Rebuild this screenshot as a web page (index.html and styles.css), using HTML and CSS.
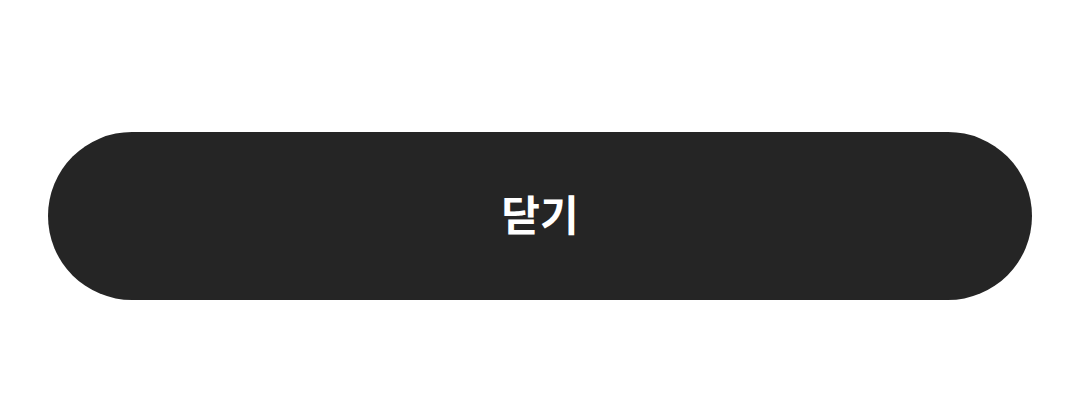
FILE: index.html
```html
<!DOCTYPE html>
<html lang="ko">
<head>
<meta charset="UTF-8">
<meta name="viewport" content="width=device-width,initial-scale=1">
<title>닫기</title>
<link rel="stylesheet" href="styles.css">
</head>
<body>
<main class="sheet">
  <button class="close-btn" type="button">닫기</button>
</main>
</body>
</html>
```

FILE: styles.css
```css
*{box-sizing:border-box;margin:0;padding:0}
body{background:#fff;font-family:"Noto Sans CJK KR","Noto Sans",sans-serif}
.sheet{padding:132px 48px 0;display:flex}
.close-btn{
  flex:1;height:168px;padding-bottom:8px;border:none;border-radius:84px;
  background:#252525;color:#fff;
  font-family:inherit;font-size:42px;font-weight:700;
  cursor:pointer
}
```
